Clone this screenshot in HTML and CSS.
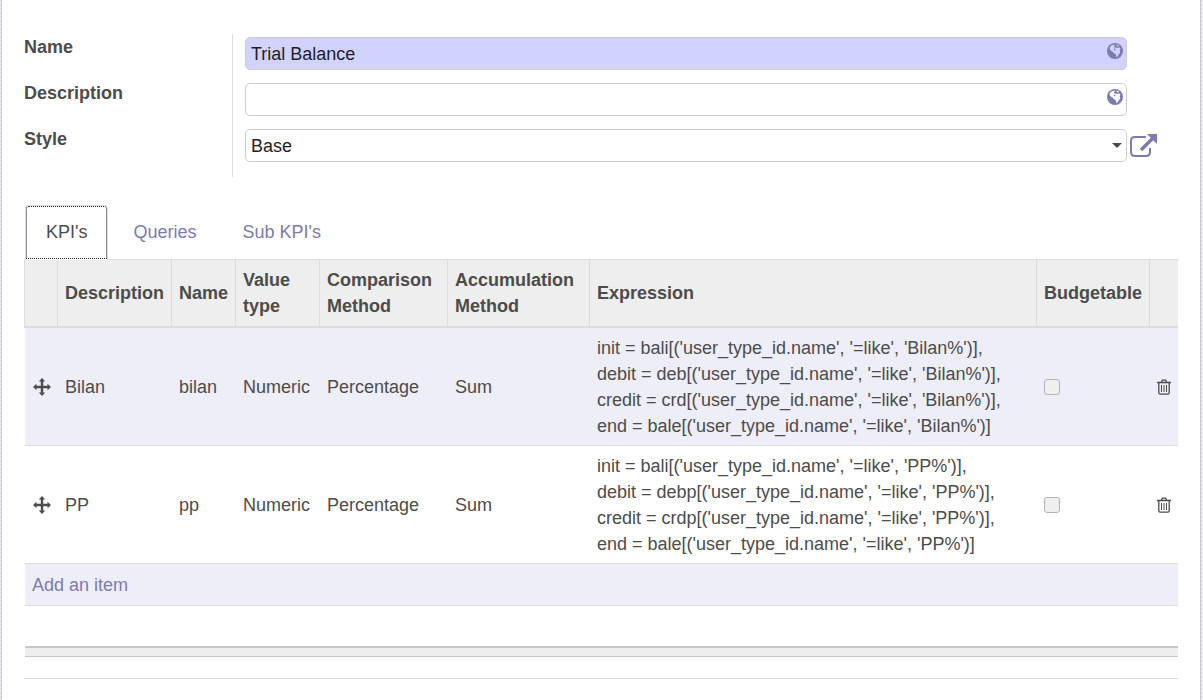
FILE: index.html
```html
<!DOCTYPE html>
<html lang="en">
<head>
<meta charset="utf-8">
<title>Trial Balance</title>
<link rel="stylesheet" href="styles.css">
</head>
<body>
<svg class="symbols" aria-hidden="true">
  <symbol id="globe" viewBox="0 0 16 16">
    <circle cx="8" cy="8" r="8" fill="#7c7bad"/>
    <path class="land" d="M2.6 4.4 4.4 2.4 7 1.4 8 2 6.8 3.4 7.8 4.8 9.4 4.4 10.4 5 12 4.2 13.4 5.4 12.8 7.4 13.2 9.2 11.8 11.4 10.4 13.4 9 14 9.2 11.8 8 10.8 6.6 10 5.8 8.8 4.2 7.8 2.8 6.4Z"/>
    <path fill="#7c7bad" d="M6.8 6 8.6 5.6 8.2 7 7.2 7.6Z"/>
    <path class="land" d="M9.8 1.6 12 2.6 11.2 3.4 9.6 3Z"/>
  </symbol>
  <symbol id="move" viewBox="0 0 18 18">
    <path fill="#4c4c4c" d="M9 0 12.2 3.5H10.2V7.8H14.5V5.8L18 9 14.5 12.2V10.2H10.2V14.5H12.2L9 18 5.8 14.5H7.8V10.2H3.5V12.2L0 9 3.5 5.8V7.8H7.8V3.5H5.8Z"/>
  </symbol>
  <symbol id="trash" viewBox="0 0 14 16">
    <path fill="none" stroke="#4c4c4c" stroke-width="1.3" d="M0 3.5H14M4.5 3 5.2 1.2H8.8L9.5 3M1.8 3.5V13.6Q1.8 15.2 3.2 15.2H10.8Q12.2 15.2 12.2 13.6V3.5"/>
    <path fill="none" stroke="#4c4c4c" d="M4.5 6V13M7 6V13M9.5 6V13"/>
  </symbol>
</svg>
<main class="sheet">
  <form class="group">
    <div class="row">
      <label class="label" for="name">Name</label>
      <div class="field required">
        <input class="control" id="name" type="text" value="Trial Balance">
        <button class="translate" type="button" aria-label="Translate name"><svg class="globe on-required"><use href="#globe"/></svg></button>
      </div>
    </div>
    <div class="row">
      <label class="label" for="description">Description</label>
      <div class="field">
        <input class="control" id="description" type="text">
        <button class="translate" type="button" aria-label="Translate description"><svg class="globe"><use href="#globe"/></svg></button>
      </div>
    </div>
    <div class="row">
      <label class="label" for="style">Style</label>
      <div class="field">
        <select class="control" id="style"><option>Base</option></select>
        <svg class="caret" viewBox="0 0 10 5" aria-hidden="true"><path fill="#4c4c4c" d="M0 0H10L5 5Z"/></svg>
      </div>
      <button class="open" type="button" aria-label="Open style">
        <svg class="open-icon" viewBox="0 0 27 24"><path fill="none" stroke="#7c7bad" stroke-width="2" d="M16 3H5Q1 3 1 7V18Q1 22 5 22H16Q20 22 20 18V14"/><path fill="none" stroke="#7c7bad" stroke-width="3.4" d="M11 16 23 4"/><path fill="#7c7bad" d="M17 0H27V10Z"/></svg>
      </button>
    </div>
  </form>

  <nav class="tabs">
    <a class="tab active" href="#kpis">KPI's</a>
    <a class="tab" href="#queries">Queries</a>
    <a class="tab" href="#subkpis">Sub KPI's</a>
  </nav>

  <table class="list" id="kpis">
    <colgroup>
      <col class="c-handle"><col class="c-desc"><col class="c-name"><col class="c-type"><col class="c-comp"><col class="c-acc"><col><col class="c-budget"><col class="c-delete">
    </colgroup>
    <thead>
      <tr><th></th><th>Description</th><th>Name</th><th>Value type</th><th>Comparison Method</th><th>Accumulation Method</th><th>Expression</th><th>Budgetable</th><th></th></tr>
    </thead>
    <tbody>
      <tr>
        <td><svg class="move" aria-hidden="true"><use href="#move"/></svg></td>
        <td>Bilan</td><td>bilan</td><td>Numeric</td><td>Percentage</td><td>Sum</td>
        <td>init = bali[('user_type_id.name', '=like', 'Bilan%')],<br>debit = deb[('user_type_id.name', '=like', 'Bilan%')],<br>credit = crd[('user_type_id.name', '=like', 'Bilan%')],<br>end = bale[('user_type_id.name', '=like', 'Bilan%')]</td>
        <td><input class="check" type="checkbox" disabled aria-label="Bilan budgetable"></td>
        <td><button class="delete" type="button" aria-label="Delete Bilan"><svg class="trash"><use href="#trash"/></svg></button></td>
      </tr>
      <tr>
        <td><svg class="move" aria-hidden="true"><use href="#move"/></svg></td>
        <td>PP</td><td>pp</td><td>Numeric</td><td>Percentage</td><td>Sum</td>
        <td>init = bali[('user_type_id.name', '=like', 'PP%')],<br>debit = debp[('user_type_id.name', '=like', 'PP%')],<br>credit = crdp[('user_type_id.name', '=like', 'PP%')],<br>end = bale[('user_type_id.name', '=like', 'PP%')]</td>
        <td><input class="check" type="checkbox" disabled aria-label="PP budgetable"></td>
        <td><button class="delete" type="button" aria-label="Delete PP"><svg class="trash"><use href="#trash"/></svg></button></td>
      </tr>
      <tr><td class="add" colspan="9"><a class="link" href="#add">Add an item</a></td></tr>
    </tbody>
  </table>
  <div class="list-foot"></div>
  <hr class="rule">
</main>
</body>
</html>
```
FILE: styles.css
```css
* { box-sizing: border-box; }

body {
  margin: 0;
  min-height: 100vh;
  padding: 0 2px 0 1px;
  background: repeating-linear-gradient(#e2e2e5 0 2px, #f0f0f2 2px 4px);
  color: #4c4c4c;
  font: 18px/26px "Liberation Sans", Arial, sans-serif;
}

.symbols { position: absolute; width: 0; height: 0; }

.sheet {
  min-height: 100vh;
  padding: 34px 22px 0;
  background: #fff;
  border: solid #c8c8d3;
  border-width: 0 1px;
}

.group {
  padding-bottom: 5px;
  background: linear-gradient(#ddd, #ddd) 208px 0 / 1px 100% no-repeat;
}

.row { display: flex; height: 46px; }
.label { width: 221px; font-weight: bold; }
.field { position: relative; flex: 1; padding-top: 3px; margin-right: 51px; }

.control {
  display: block;
  width: 100%;
  height: 33px;
  padding: 0 5px;
  appearance: none;
  background: #fff;
  border: 1px solid #ccc;
  border-radius: 5px;
  color: #1f1f1f;
  font: inherit;
}
input.control { padding-top: 1px; }
.required .control { background: #d2d2ff; }

button { padding: 0; background: none; border: 0; cursor: pointer; }
.translate { position: absolute; top: 9px; right: 4px; }
.globe { display: block; width: 16px; height: 16px; color: #fff; }
.globe.on-required { color: #d2d2ff; }
.land { fill: currentColor; }
.caret { position: absolute; top: 17px; right: 5px; width: 10px; height: 5px; pointer-events: none; }

.row:last-child .field { margin-right: 3px; }
.open { width: 48px; height: 38px; padding-top: 2px; text-align: left; }
.open-icon { display: block; width: 27px; height: 24px; }

.tabs { display: flex; gap: 4px; margin: 28px 0 -1px 1px; }
.tab {
  padding: 13px 20px 15px;
  border: 1px solid transparent;
  border-bottom: 0;
  border-radius: 4px 4px 0 0;
  color: #7c7bad;
  text-decoration: none;
}
.tab.active {
  position: relative;
  background: #fff;
  border-color: #ddd;
  color: #4c4c4c;
  outline: 1px dotted #222;
  outline-offset: -2px;
}

.list {
  width: 100%;
  table-layout: fixed;
  border-spacing: 0;
}
.c-handle { width: 33px; }
.c-desc { width: 114px; }
.c-name { width: 64px; }
.c-type { width: 84px; }
.c-comp { width: 128px; }
.c-acc { width: 142px; }
.c-budget { width: 113px; }
.c-delete { width: 29px; }

th {
  padding: 7px 0 7px 7px;
  background: #eee;
  border: solid #ddd;
  border-width: 1px 0 2px 1px;
  text-align: left;
}
td { padding: 7px 0 6px 8px; border-bottom: 1px solid #ddd; }
td:first-child { border-left: 1px solid #fff; }
td.add { padding: 8px 7px 7px; }
tbody tr:nth-child(odd) { background: #eeeef8; }
td svg, .check, .delete { display: block; }
.move { width: 18px; height: 18px; }
.trash { width: 14px; height: 16px; }

.check {
  width: 16px;
  height: 16px;
  margin: 0;
  appearance: none;
  background: #efefef;
  border: 1px solid #b4b4b4;
  border-radius: 3px;
}
.link { color: #7c7bad; text-decoration: none; }

.list-foot {
  height: 11px;
  margin: 40px 0 0 1px;
  background: #eee;
  border: solid #c8c8c8;
  border-width: 2px 0 1px;
}
.rule { margin: 21px 0 0; border: 0; border-top: 1px solid #ddd; }
```
